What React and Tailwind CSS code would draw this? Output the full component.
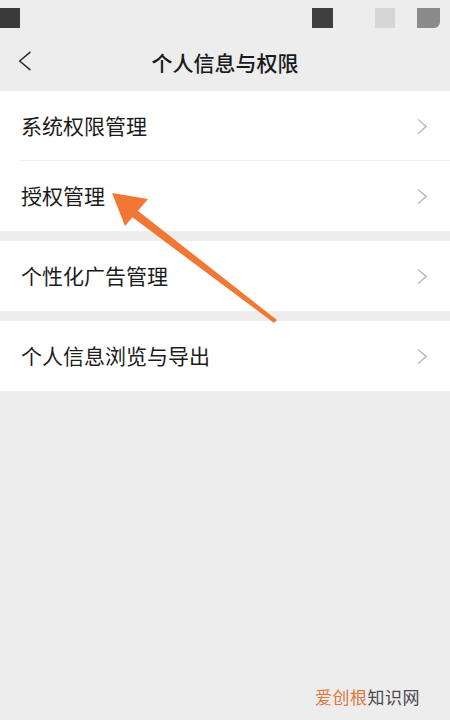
const groups = [
  ['系统权限管理', '授权管理'],
  ['个性化广告管理'],
  ['个人信息浏览与导出'],
];

function Chevron({ className, left }) {
  return (
    <svg className={className} viewBox="0 0 12 18" fill="none" stroke="currentColor" strokeWidth="1.4" strokeLinecap="round" strokeLinejoin="round">
      {left ? <polyline points="11,1 1.5,9 11,17" /> : <polyline points="1.5,1.5 10,9 1.5,16.5" />}
    </svg>
  );
}

function Row({ label, divider }) {
  return (
    <div className="relative flex h-[70px] items-center justify-between pl-[21px] pr-[22px]">
      <span className="text-[21px] text-[#1c1c1c]">{label}</span>
      <Chevron className="h-[17px] w-[11px] text-[#b0b0b0]" />
      {divider && <div className="absolute bottom-0 left-[20px] right-0 h-px bg-[#ececec]" />}
    </div>
  );
}

export default function App() {
  return (
    <div
      className="relative h-[720px] w-[450px] overflow-hidden bg-[#ededed]"
      style={{ fontFamily: '"Noto Sans CJK SC", "Noto Sans", sans-serif' }}
    >
      {/* status bar */}
      <div className="flex h-[36px] items-start pt-[8px]">
        <div className="h-[20px] w-[20px] bg-[#3a3a3a]" />
        <div className="flex-1" />
        <div className="h-[20px] w-[21px] bg-[#3f3f3f]" />
        <div className="ml-[42px] h-[20px] w-[20px] bg-[#d6d6d6]" />
        <div className="ml-[22px] mr-[10px] h-[20px] w-[23px] rounded-br-[6px] bg-[#8a8a8a]" />
      </div>

      {/* header */}
      <div className="relative flex h-[54px] items-center justify-center">
        <Chevron left className="absolute left-[18px] top-[13px] h-[24px] w-[13px] text-[#2a2a2a]" />
        <span className="text-[21px] font-medium text-[#1a1a1a]">个人信息与权限</span>
      </div>

      <div className="flex flex-col gap-[10px] pt-[1px]">
        {groups.map((g, gi) => (
          <div key={gi} className="bg-white">
            {g.map((label, i) => (
              <Row key={label} label={label} divider={i < g.length - 1} />
            ))}
          </div>
        ))}
      </div>

      {/* annotation arrow */}
      <svg className="absolute left-0 top-0" width="450" height="720" viewBox="0 0 450 720">
        <polygon points="277,320 274,323 128,214 133,207" fill="#f37734" />
        <polygon points="112,193 148,199 125,226" fill="#f37734" />
      </svg>

      {/* watermark */}
      <div className="absolute bottom-[11px] right-[30px] text-[17px] tracking-[0.5px]">
        <span className="text-[#e0763a]">爱创根</span>
        <span className="text-[#4a4a4a]">知识网</span>
      </div>
    </div>
  );
}
